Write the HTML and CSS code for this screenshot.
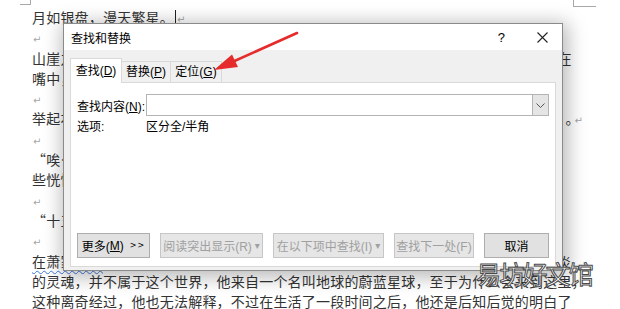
FILE: index.html
```html
<!DOCTYPE html>
<html lang="zh-CN">
<head>
    <meta charset="UTF-8">
    <title>查找和替换</title>
    <link rel="stylesheet" href="styles.css">
</head>
<body>
    <div class="page">
        <div class="mark mark-left"></div>
        <div class="mark mark-right"></div>

        <div class="doc">
            <p class="line">月如银盘，漫天繁星。<span class="caret"></span><span class="pm">↵</span></p>
            <p class="line"><span class="pm">↵</span></p>
            <p class="line">山崖之上，一个少年静静坐在一块青石上面，抬头望着满天星辰，随意将一根青草叼在</p>
            <p class="line">嘴中，神情显得悠闲自在。<span class="pm">↵</span></p>
            <p class="line"><span class="pm">↵</span></p>
            <p class="line">举起右手，他看着自己的手掌，轻声自语道：这一切真的好像一场梦，实在不可思议<span class="stop">。</span><span class="pm">↵</span></p>
            <p class="line"><span class="pm">↵</span></p>
            <p class="line">“唉…”少年轻轻叹了一口气，脸上露出了一丝复杂的神色，眼神之中也带着几分有</p>
            <p class="line">些恍惚，仿佛仍旧没有从某种情绪之中回过神来。<span class="pm">↵</span></p>
            <p class="line"><span class="pm">↵</span></p>
            <p class="line">“十五年了，我来到这个世界已经整整十五年了啊。”<span class="pm">↵</span></p>
            <p class="line"><span class="pm">↵</span></p>
            <p class="line"><span class="wavy">在萧家众人</span>的眼中，他只是一个普普通通的少年而已，可是没有人知道，如今少年萧炎</p>
            <p class="line">的灵魂，并不属于这个世界，他来自一个名叫地球的蔚蓝星球，至于为什么会来到这里，</p>
            <p class="line">这种离奇经过，他也无法解释，不过在生活了一段时间之后，他还是后知后觉的明白了</p>
        </div>

        <div class="dialog">
            <div class="titlebar">
                <span class="title">查找和替换</span>
                <span class="help">?</span>
                <span class="close">
                    <svg width="11" height="11" viewBox="0 0 11 11"><path d="M0.5 0.5 L10.5 10.5 M10.5 0.5 L0.5 10.5" stroke="#222" stroke-width="1.1" fill="none"/></svg>
                </span>
            </div>
            <div class="dlg-body">
                <div class="tabs">
                    <div class="tab active">查找(<u>D</u>)</div>
                    <div class="tab">替换(<u>P</u>)</div>
                    <div class="tab">定位(<u>G</u>)</div>
                </div>
                <div class="panel">
                    <div class="find-row">
                        <span class="label">查找内容(<u>N</u>):</span>
                        <div class="combo">
                            <div class="combo-btn">
                                <svg width="9" height="5" viewBox="0 0 9 5"><path d="M0.5 0.5 L4.5 4.5 L8.5 0.5" stroke="#555" stroke-width="1" fill="none"/></svg>
                            </div>
                        </div>
                    </div>
                    <div class="opt-row">
                        <span class="label">选项:</span>
                        <span>区分全/半角</span>
                    </div>
                    <div class="buttons">
                        <div class="btn btn-more">更多(<u>M</u>) <span class="chev">&gt;&gt;</span></div>
                        <div class="btn disabled btn-read">阅读突出显示(R) <span class="tri">▾</span></div>
                        <div class="btn disabled btn-in">在以下项中查找(I) <span class="tri">▾</span></div>
                        <div class="btn disabled btn-next">查找下一处(F)</div>
                        <div class="btn btn-cancel">取消</div>
                    </div>
                </div>
            </div>
        </div>

        <svg class="arrow" width="620" height="309" viewBox="0 0 620 309">
            <line x1="297" y1="33" x2="230" y2="63" stroke="#e52b2b" stroke-width="2.6" stroke-linecap="round"/>
            <polygon points="214,70 232,54.5 238,67" fill="#e52b2b"/>
        </svg>

        <div class="watermark">易坊好文馆</div>
    </div>
</body>
</html>
```

FILE: styles.css
```css
body {
    margin: 0;
    background-color: #ffffff;
    font-family: "Noto Sans CJK SC", sans-serif;
}
.page {
    position: relative;
    width: 620px;
    height: 309px;
    overflow: hidden;
    background: white;
}
.mark {
    position: absolute;
    top: 0;
    border-color: #a8a8a8;
    border-style: solid;
    border-width: 0;
}
.mark-left {
    left: 20px;
    width: 10px;
    height: 4px;
    border-right-width: 1px;
    border-bottom-width: 1px;
}
.mark-right {
    left: 573px;
    width: 22px;
    height: 6px;
    border-left-width: 1px;
    border-bottom-width: 1px;
}

/* document behind the dialog */
.doc {
    padding: 7px 0 0 32px;
    font-size: 14px;
    line-height: 20.3px;
    color: #333;
    letter-spacing: 0.2px;
}
.line {
    margin: 0;
    white-space: nowrap;
    height: 20.3px;
}
.stop {
    margin-left: 8px;
    letter-spacing: -6px;
}
.pm {
    color: #a6a6a6;
    font-family: "DejaVu Sans", sans-serif;
    font-size: 10px;
    margin-left: 1px;
}
.caret {
    display: inline-block;
    width: 1px;
    height: 16px;
    background: #222;
    vertical-align: -3px;
    margin-left: 1px;
}
.wavy {
    text-decoration: underline wavy #3b78d8;
    text-decoration-thickness: 1px;
    text-underline-offset: 3px;
}

/* dialog */
.dialog {
    position: absolute;
    left: 63px;
    top: 23px;
    width: 498px;
    height: 246px;
    border: 1px solid #8a8a8a;
    background: #f0f0f0;
    box-shadow: 2px 3px 18px 3px rgba(0, 0, 0, 0.28);
    display: flex;
    flex-direction: column;
    font-family: "Liberation Sans", "Noto Sans CJK SC", sans-serif;
    font-size: 12px;
    color: #000;
}
.titlebar {
    height: 26px;
    background: white;
    display: flex;
    align-items: center;
    padding-left: 7px;
}
.title {
    flex: 1;
}
.help {
    font-size: 13px;
    margin-right: 32px;
}
.close {
    display: flex;
    margin-right: 14px;
}
.close svg {
    display: block;
}
.dlg-body {
    flex: 1;
    display: flex;
    flex-direction: column;
    padding: 8px 6px 3px 6px;
}
.tabs {
    display: flex;
    align-items: flex-end;
    height: 24px;
}
.tab {
    height: 21px;
    line-height: 20px;
    text-align: center;
    white-space: nowrap;
    border: 1px solid #d9d9d9;
    border-bottom: none;
    border-left: none;
    box-sizing: border-box;
    width: 49px;
}
.tab.active {
    width: 52px;
    height: 25px;
    line-height: 24px;
    background: white;
    border-left: 1px solid #d9d9d9;
    margin-bottom: -1px;
    position: relative;
}
.tab:nth-child(3) {
    width: 51px;
}
.panel {
    flex: 1;
    background: white;
    border: 1px solid #d9d9d9;
    display: flex;
    flex-direction: column;
    padding: 11px 6px 8px 6px;
}
.find-row {
    display: flex;
    align-items: center;
    height: 22px;
}
.label {
    width: 69px;
    flex: none;
    white-space: nowrap;
}
.combo {
    flex: 1;
    height: 22px;
    box-sizing: border-box;
    border: 1px solid #b4b4b4;
    display: flex;
    justify-content: flex-end;
}
.combo-btn {
    width: 15px;
    background: #e5e5e5;
    border-left: 1px solid #b4b4b4;
    display: flex;
    align-items: center;
    justify-content: center;
}
.opt-row {
    display: flex;
    margin-top: 3px;
    line-height: 16px;
}
.buttons {
    margin-top: auto;
    display: flex;
    gap: 10px;
}
.btn {
    height: 25px;
    box-sizing: border-box;
    border: 1px solid #adadad;
    background: #e1e1e1;
    display: flex;
    align-items: center;
    justify-content: center;
    white-space: nowrap;
}
.btn.disabled {
    color: #a0a0a0;
    background: #e6e6e6;
    border-color: #c6c6c6;
}
.btn-more { width: 73px; }
.btn-read { width: 103px; }
.btn-in { width: 111px; }
.btn-next { width: 80px; }
.btn-cancel { width: 65px; }
.chev {
    font-family: "DejaVu Sans", sans-serif;
    font-size: 8px;
    letter-spacing: 1px;
    margin-left: 6px;
}
.tri {
    font-family: "DejaVu Sans", sans-serif;
    font-size: 10px;
    margin-left: 3px;
}

.arrow {
    position: absolute;
    left: 0;
    top: 0;
    pointer-events: none;
}
.watermark {
    position: absolute;
    left: 476px;
    top: 258px;
    font-size: 25px;
    line-height: 30px;
    color: white;
    -webkit-text-stroke: 1px #4a4a4a;
    letter-spacing: -1.8px;
}
```
